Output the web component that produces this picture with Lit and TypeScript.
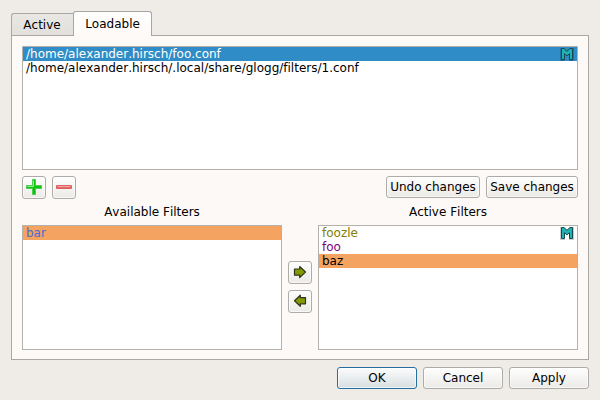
import { LitElement, html, css, svg } from "lit";
import { customElement, property } from "lit/decorators.js";
import { classMap } from "lit/directives/class-map.js";

interface Row {
  text: string;
  tone: string;
  modified?: boolean;
}

const files: Row[] = [
  { text: "/home/alexander.hirsch/foo.conf", tone: "selected", modified: true },
  { text: "/home/alexander.hirsch/.local/share/glogg/filters/1.conf", tone: "plain" },
];
const available: Row[] = [{ text: "bar", tone: "bar" }];
const active: Row[] = [
  { text: "foozle", tone: "olive", modified: true },
  { text: "foo", tone: "purple" },
  { text: "baz", tone: "sandy" },
];

const plusIcon = svg`<path d="M6.500 .5h3v6h6v3h-6v6h-3v-6h-6v-3h6z" fill="#0cc40c" stroke="#4fcb4f"/><path d="M7.500 1.500v6h-6" fill="none" stroke="#8cf58c"/>`;
const minusIcon = svg`<path d="M.5 6.500h15v3h-15z" fill="#e86464" stroke="#d86464"/><path d="M1.500 7.500h13" stroke="#f6a8a8"/>`;
const rightIcon = svg`<path d="M2.500 5h5.200V2.500L13.500 8 7.700 13.600v-2.500H2.500z" fill="#839a00" stroke="#30341c" stroke-width="1.200" stroke-linejoin="round"/>`;
const leftIcon = svg`<path d="M13.500 4.700H8.300V2.200L2.500 7.700l5.800 5.600v-2.500h5.200z" fill="#839a00" stroke="#30341c" stroke-width="1.200" stroke-linejoin="round"/>`;

@customElement("item-list")
class ItemList extends LitElement {
  @property({ attribute: false }) rows: Row[] = [];

  static styles = css`
    :host { display: block; box-sizing: border-box; border: 1px solid #b4b0ac; background: #fff; }
    .row { height: 14px; line-height: 14px; padding-left: 3px; display: flex; justify-content: space-between; white-space: pre; }
    .selected { background: #308cc6; color: #fff; }
    .plain { color: #000; }
    .bar { background: #f4a460; color: #4a6bd2; }
    .olive { color: #808000; }
    .purple { color: #800080; }
    .sandy { background: #f4a460; color: #000; }
    .mark { width: 14px; height: 14px; margin-right: 3px; display: block; }
    .halo { fill: none; stroke: #000; stroke-opacity: .2; stroke-width: 1; }
    .letter { fill: #20b2b2; stroke: #17484e; stroke-width: 1; }
  `;

  render() {
    return this.rows.map(
      (r) => html`<div class="row ${r.tone}"><span>${r.text}</span>${r.modified
        ? html`<svg class="mark" viewBox="0 0 14 14">
            <path class="halo" d="M.5 1v12.500h4.500M13.500 1v12.500H9" />
            <path class="letter" d="M1.500 1.500H4L7 4.300 10 1.500h2.500v11h-3V6.700L7 8.800 4.500 6.700v5.800h-3z" />
          </svg>`
        : null}</div>`,
    );
  }
}

@customElement("push-button")
class PushButton extends LitElement {
  @property({ type: Boolean }) default = false;

  static styles = css`
    :host { display: flex; box-sizing: border-box; height: 22px; }
    .face {
      flex: 1; display: flex; align-items: center; justify-content: center;
      border: 1px solid #aeaba8; border-radius: 3px; box-shadow: inset 0 0 0 1px #ffffffa0;
      background: linear-gradient(#fefefe, #ebeae7); white-space: nowrap; color: #000;
    }
    .default { border-color: #246f9f; background: linear-gradient(#fbfcfc, #d8dfe2); }
  `;

  render() {
    return html`<div class=${classMap({ face: true, default: this.default })}><slot></slot></div>`;
  }
}

@customElement("app-root")
class AppRoot extends LitElement {
  static styles = css`
    :host {
      display: flex; flex-direction: column; box-sizing: border-box; width: 600px; height: 400px;
      padding: 11px; background: #efebe7; font: 12px/14px "DejaVu Sans", sans-serif; color: #000;
      font-kerning: none; font-variant-ligatures: none;
    }
    .tabs { display: flex; align-items: flex-end; height: 25px; margin-bottom: -1px; }
    .tab {
      box-sizing: border-box; height: 23px; width: 63px; border: 1px solid #aaa6a2; border-right: 0;
      border-radius: 3px 0 0 0; background: linear-gradient(#e9e7e4, #e2e0dc);
      text-align: center; line-height: 22px; padding-right: 2px;
    }
    .current {
      width: 79px; height: 25px; margin-left: -1px; border-right: 1px solid #aaa6a2; border-bottom: 0;
      border-radius: 3px 3px 0 0; background: linear-gradient(#ffffff, #fdf9f6); line-height: 24px; position: relative; padding: 0;
    }
    .panel {
      box-sizing: border-box; height: 325px; border: 1px solid #aaa6a2; background: #fdf9f6;
      padding: 10px; display: flex; flex-direction: column;
    }
    .files { height: 124px; flex: none; }
    .tools { display: flex; gap: 6px; margin-top: 6px; height: 23px; }
    .square { width: 24px; height: 23px; }
    .spacer { flex: 1; }
    .undo { width: 94px; }
    .save { width: 92px; }
    .filters { display: grid; grid-template-columns: 260px 24px 260px; column-gap: 6px; grid-template-rows: 14px 125px; row-gap: 6px; margin-top: 6px; }
    .title { text-align: center; }
    .right { grid-column: 3; }
    .arrows { display: flex; flex-direction: column; justify-content: center; gap: 6px; padding-bottom: 1px; }
    .arrow { height: 23px; }
    .icon { display: block; width: 16px; height: 16px; margin-bottom: 1px; }
    .actions { display: flex; justify-content: flex-end; gap: 6px; margin-top: 7px; }
    .action { width: 80px; }
  `;

  render() {
    const icon = (shape: unknown) => html`<svg class="icon" viewBox="0 0 16 16">${shape}</svg>`;
    return html`
      <div class="tabs"><div class="tab">Active</div><div class="tab current">Loadable</div></div>
      <div class="panel">
        <item-list class="files" .rows=${files}></item-list>
        <div class="tools">
          <push-button class="square">${icon(plusIcon)}</push-button>
          <push-button class="square">${icon(minusIcon)}</push-button>
          <div class="spacer"></div>
          <push-button class="undo">Undo changes</push-button>
          <push-button class="save">Save changes</push-button>
        </div>
        <div class="filters">
          <div class="title">Available Filters</div>
          <div class="title right">Active Filters</div>
          <item-list .rows=${available}></item-list>
          <div class="arrows">
            <push-button class="arrow">${icon(rightIcon)}</push-button>
            <push-button class="arrow">${icon(leftIcon)}</push-button>
          </div>
          <item-list .rows=${active}></item-list>
        </div>
      </div>
      <div class="actions">
        <push-button class="action" default>OK</push-button>
        <push-button class="action">Cancel</push-button>
        <push-button class="action">Apply</push-button>
      </div>
    `;
  }
}
